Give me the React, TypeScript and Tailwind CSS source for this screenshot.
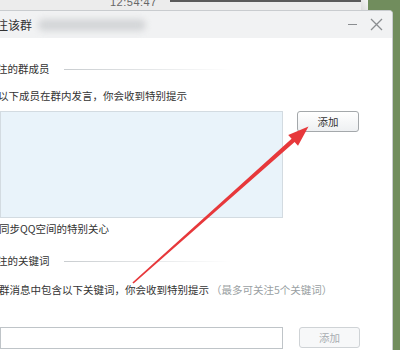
import React from 'react';

function AddButton({ disabled }: { disabled?: boolean }) {
  return (
    <div
      className={
        disabled
          ? 'flex items-center justify-center w-[61px] h-[21px] rounded-[3px] border border-[#cfd3d6] bg-[#f7f8f9] text-[10.5px] text-[#a8adb1]'
          : 'flex items-center justify-center w-[62px] h-[21px] rounded-[3px] border border-[#a4a8ab] bg-linear-to-b from-[#ffffff] to-[#eef0f2] text-[10.5px] text-[#333]'
      }
    >
      添加
    </div>
  );
}

function SectionHeader({ text }: { text: string }) {
  return (
    <div className="flex items-center h-[16px]">
      <span className="ml-[-3px] text-[10.5px] text-[#333] whitespace-nowrap">{text}</span>
      <div className="ml-[14px] h-px w-[168px] bg-linear-to-r from-[#c9cdd0] to-transparent" />
    </div>
  );
}

export default function App() {
  return (
    <div className="relative w-[400px] h-[350px] overflow-hidden bg-[#718d5d] font-['Noto_Sans_CJK_SC','Noto_Sans',sans-serif]">
      {/* chat window behind the dialog */}
      <div className="relative w-[368px] h-[12px] bg-[#ececec] overflow-hidden">
        <div className="ml-[170px] h-[2px] bg-[#5a5a5a]" />
        <span className="absolute left-[110px] top-[-4px] text-[11px] leading-[12px] text-[#666] font-['Liberation_Sans',sans-serif] tracking-[0.5px]">
          12:54:47
        </span>
        <div className="absolute right-0 top-0 w-[7px] h-[12px] bg-linear-to-bl from-[#f6f6f6] to-[#d9d9d9]" />
      </div>

      {/* dialog window */}
      <div className="absolute left-0 top-[10px] w-[393px] h-[345px] bg-white rounded-tr-[4px] border-r border-t border-[#c9cccf] overflow-hidden">
        {/* title bar */}
        <div className="flex items-center h-[27px] bg-[#f1f2f3]">
          <span className="ml-[-4px] text-[12px] text-[#333] whitespace-nowrap">注该群</span>
          <div className="ml-[6px] w-[108px] h-[12px] rounded-full bg-[#d4d6d8] blur-[3px]" />
          <div className="flex-1" />
          <div className="w-[9px] h-px bg-[#8a8d90] mr-[13px]" />
          <svg width="13" height="13" viewBox="0 0 13 13" className="mr-[9px]">
            <path d="M1 1 L12 12 M12 1 L1 12" stroke="#8a8d90" strokeWidth="1.3" />
          </svg>
        </div>

        {/* body */}
        <div className="flex flex-col">
          <div className="mt-[23px]">
            <SectionHeader text="注的群成员" />
          </div>
          <div className="mt-[11px] h-[16px] flex items-center">
            <span className="ml-[-2px] text-[10.5px] text-[#333] whitespace-nowrap">
              以下成员在群内发言，你会收到特别提示
            </span>
          </div>
          <div className="mt-[7px] flex">
            <div className="w-[283px] h-[107px] bg-[#e9f3fa] border border-[#d3dbe1]" />
            <div className="ml-[14px]">
              <AddButton />
            </div>
          </div>
          <div className="mt-[3px] h-[16px] flex items-center">
            <span className="ml-[-1px] text-[10.5px] text-[#333] whitespace-nowrap">同步QQ空间的特别关心</span>
          </div>
          <div className="mt-[16px]">
            <SectionHeader text="注的关键词" />
          </div>
          <div className="mt-[13px] h-[16px] flex items-center whitespace-nowrap">
            <span className="ml-[-1px] text-[10.5px] text-[#333]">
              群消息中包含以下关键词，你会收到特别提示
            </span>
            <span className="ml-[2px] text-[10.5px] text-[#9a9fa3]">（最多可关注5个关键词）</span>
          </div>
          <div className="mt-[29px] flex">
            <div className="w-[283px] h-[22px] bg-white border border-[#bfc4c8]" />
            <div className="ml-[16px]">
              <AddButton disabled />
            </div>
          </div>
        </div>
      </div>

      {/* red annotation arrow */}
      <svg className="absolute left-0 top-0 pointer-events-none" width="400" height="350" viewBox="0 0 400 350">
        <polygon
          points="132.4,282.4 291.6,138.8 288.2,135 308.5,126.5 298,145.7 294.6,141.9 133.6,283.6"
          fill="#e7383b"
        />
      </svg>
    </div>
  );
}
